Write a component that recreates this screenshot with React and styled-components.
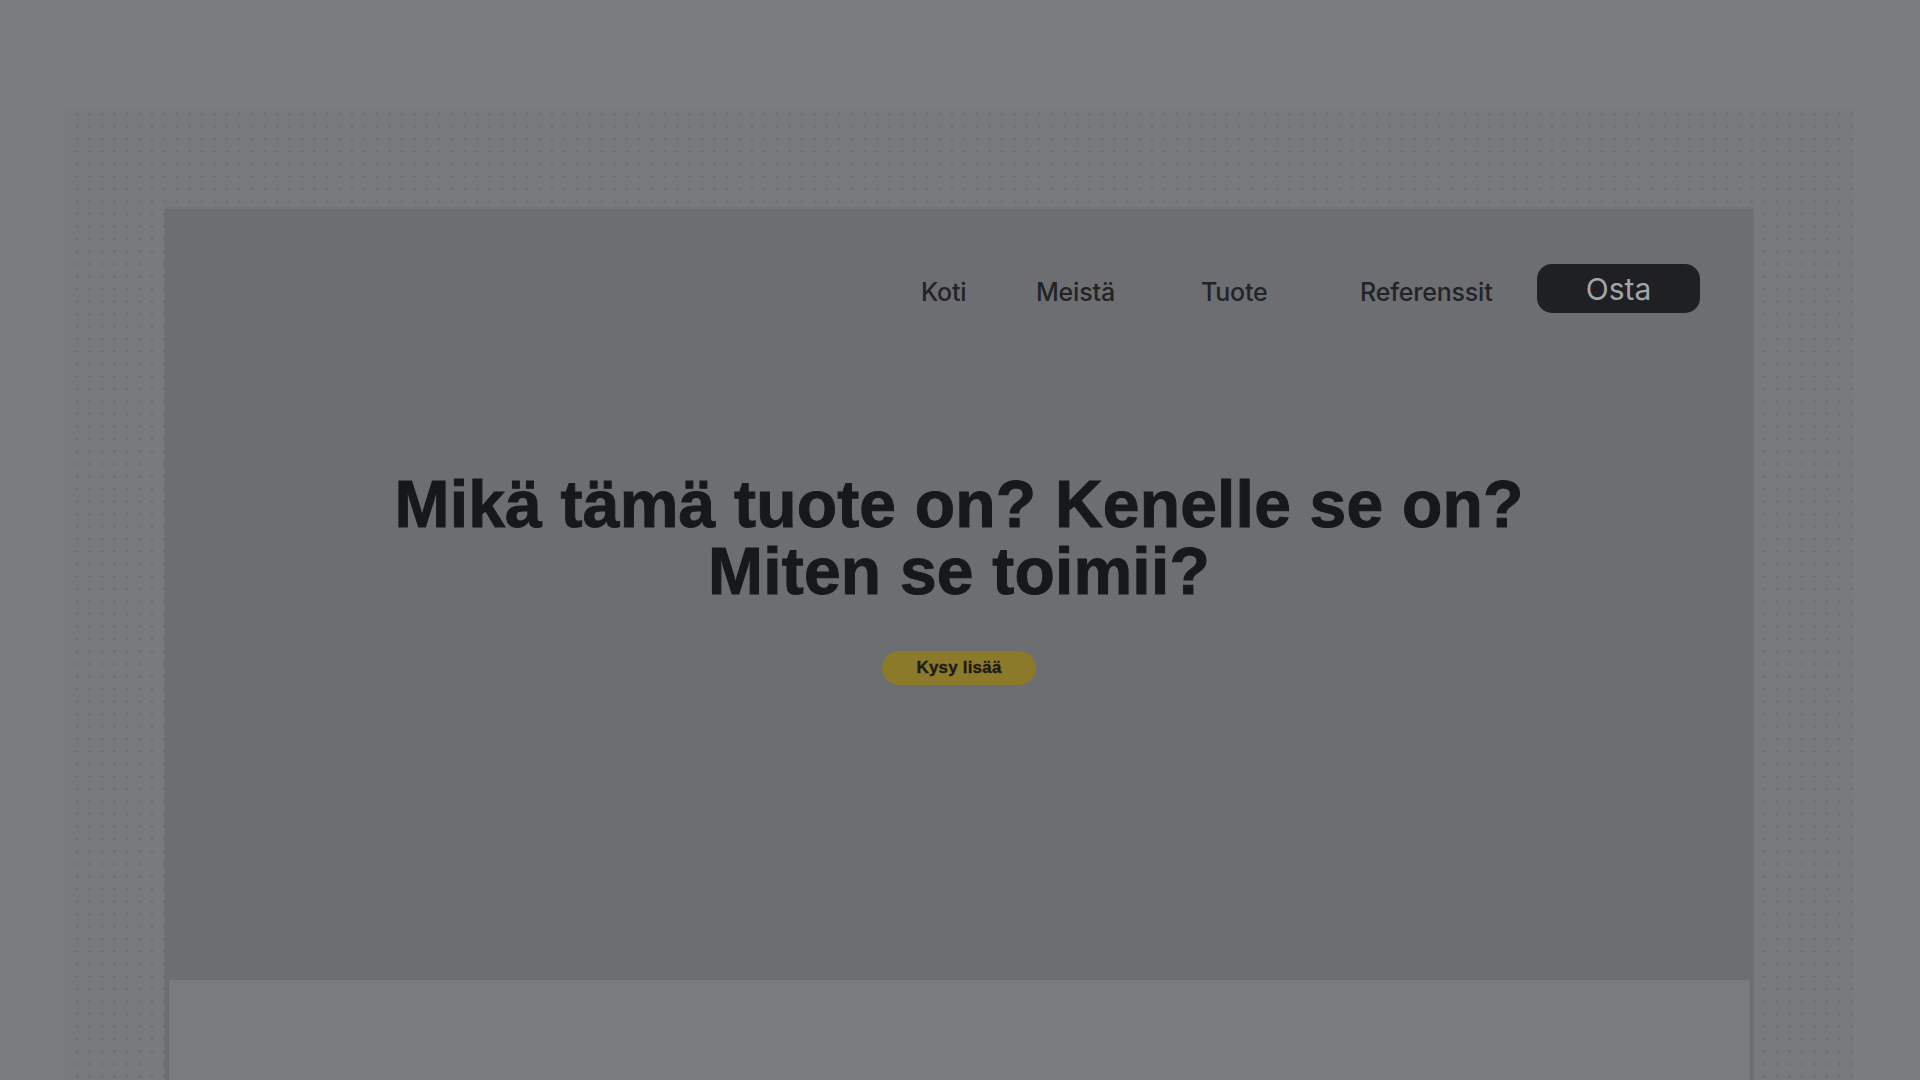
import React from "react";
import styled, { createGlobalStyle } from "styled-components";

const GlobalStyle = createGlobalStyle`
  html, body {
    margin: 0;
    padding: 0;
    background: #7b7c80;
    overflow: hidden;
  }
  * { box-sizing: border-box; }
`;

const Page = styled.div`
  width: 1920px;
  height: 1080px;
  padding: 108px 67px 0 65px;
  background: #7b7c80;
`;

const Dotted = styled.div`
  height: 100%;
  padding: 100px 100px 0 100px;
  background-color: #797a7e;
  background-image: radial-gradient(circle, #6a6b6f 0.9px, transparent 1.4px);
  background-size: 12.5px 12.5px;
  background-position: 5.75px -0.25px;
`;

const Card = styled.div`
  height: 100%;
  display: flex;
  flex-direction: column;
  background: #6d6e72;
  border-top: 1px solid #75767a;
  box-shadow: 0 0 2px rgba(0, 0, 0, 0.12);
`;

const Nav = styled.nav`
  display: flex;
  justify-content: flex-end;
  align-items: center;
  padding: 55px 53px 0 0;
  height: 104px;
`;

const NavLink = styled.a`
  width: ${(p) => p.$w}px;
  padding-top: 6px;
  font-family: Inter, "Open Sans", sans-serif;
  font-weight: 550;
  font-size: 25px;
  letter-spacing: -0.2px;
  color: #222327;
  text-decoration: none;
  white-space: nowrap;
`;

const BuyButton = styled.button`
  width: 163px;
  height: 49px;
  border: none;
  border-radius: 15px;
  background: #1f2024;
  color: #a4a5a9;
  font-family: Inter, "Open Sans", sans-serif;
  font-weight: 400;
  font-size: 30px;
  display: flex;
  align-items: center;
  justify-content: center;
  padding: 0;
`;

const Hero = styled.section`
  display: flex;
  flex-direction: column;
  align-items: center;
  padding-top: 158px;
`;

const Title = styled.h1`
  margin: 0;
  text-align: center;
  font-family: "Liberation Sans", Arial, sans-serif;
  font-weight: 700;
  font-size: 66px;
  line-height: 67px;
  letter-spacing: 0.2px;
  color: #17181b;
  -webkit-text-stroke: 1px #17181b;
`;

const AskButton = styled.button`
  margin-top: 46px;
  width: 154px;
  height: 34px;
  border: none;
  border-radius: 17px;
  background: #8a7a2a;
  color: #1a1a17;
  font-family: "Liberation Sans", Arial, sans-serif;
  font-weight: 700;
  font-size: 17px;
  letter-spacing: 0.2px;
  -webkit-text-stroke: 0.3px #1a1a17;
  padding: 0;
`;

const LowerPanel = styled.div`
  margin: auto 2px 0 3px;
  height: 100px;
  background: #7a7b7f;
  border-left: 1px solid #6a6b6f;
  border-right: 1px solid #6a6b6f;
`;

export default function App() {
  return (
    <>
      <GlobalStyle />
      <Page>
        <Dotted>
          <Card>
            <Nav>
              <NavLink $w={115}>Koti</NavLink>
              <NavLink $w={165}>Meistä</NavLink>
              <NavLink $w={159}>Tuote</NavLink>
              <NavLink $w={177}>Referenssit</NavLink>
              <BuyButton>Osta</BuyButton>
            </Nav>
            <Hero>
              <Title>
                Mikä tämä tuote on? Kenelle se on?
                <br />
                Miten se toimii?
              </Title>
              <AskButton>Kysy lisää</AskButton>
            </Hero>
            <LowerPanel />
          </Card>
        </Dotted>
      </Page>
    </>
  );
}
